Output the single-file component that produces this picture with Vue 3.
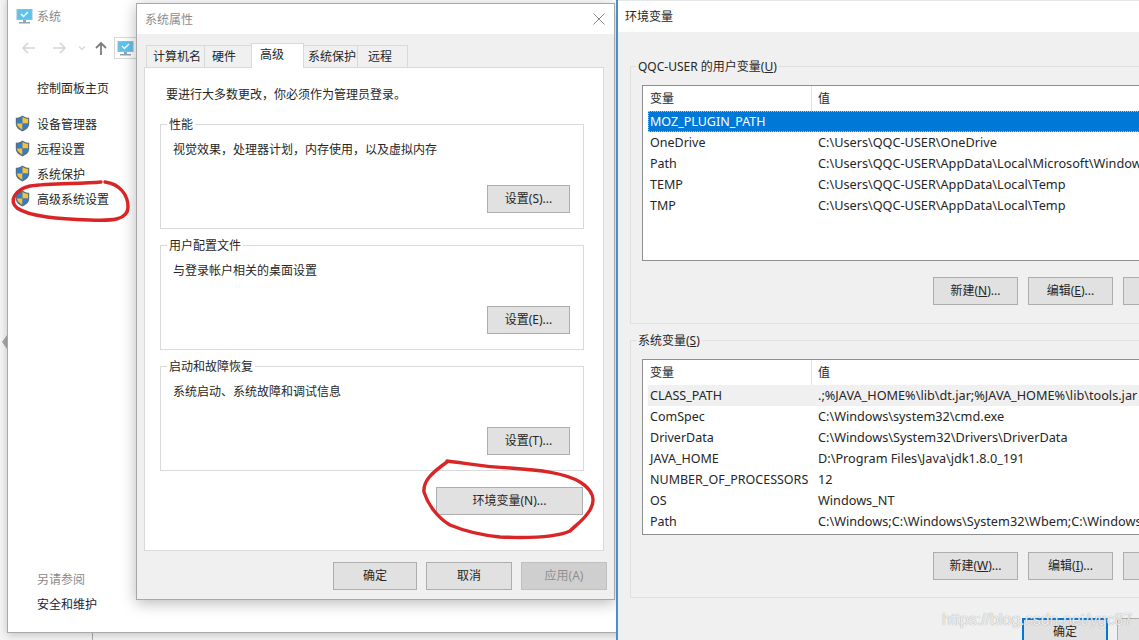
<script setup>
const navItems = ['设备管理器', '远程设置', '系统保护', '高级系统设置']
const tabs = [
  { label: '计算机名', w: 59, pad: 6 },
  { label: '硬件', w: 48, pad: 7 },
  { label: '高级', w: 53, pad: 8, active: true },
  { label: '系统保护', w: 55, pad: 4 },
  { label: '远程', w: 51, pad: 10 }
]
const groups = [
  { title: '性能', text: '视觉效果，处理器计划，内存使用，以及虚拟内存', btn: '设置(S)...' },
  { title: '用户配置文件', text: '与登录帐户相关的桌面设置', btn: '设置(E)...' },
  { title: '启动和故障恢复', text: '系统启动、系统故障和调试信息', btn: '设置(T)...' }
]
const userVars = [
  { n: 'MOZ_PLUGIN_PATH', v: '', sel: true },
  { n: 'OneDrive', v: 'C:\\Users\\QQC-USER\\OneDrive' },
  { n: 'Path', v: 'C:\\Users\\QQC-USER\\AppData\\Local\\Microsoft\\WindowsApps;' },
  { n: 'TEMP', v: 'C:\\Users\\QQC-USER\\AppData\\Local\\Temp' },
  { n: 'TMP', v: 'C:\\Users\\QQC-USER\\AppData\\Local\\Temp' }
]
const sysVars = [
  { n: 'CLASS_PATH', v: '.;%JAVA_HOME%\\lib\\dt.jar;%JAVA_HOME%\\lib\\tools.jar', soft: true },
  { n: 'ComSpec', v: 'C:\\Windows\\system32\\cmd.exe' },
  { n: 'DriverData', v: 'C:\\Windows\\System32\\Drivers\\DriverData' },
  { n: 'JAVA_HOME', v: 'D:\\Program Files\\Java\\jdk1.8.0_191' },
  { n: 'NUMBER_OF_PROCESSORS', v: '12' },
  { n: 'OS', v: 'Windows_NT' },
  { n: 'Path', v: 'C:\\Windows;C:\\Windows\\System32\\Wbem;C:\\Windows\\System32' }
]
</script>

<template>
  <div class="desk">
    <div class="side-arrow"></div>
    <div class="taskline"></div>

    <section class="win sys">
      <div class="sys-title">
        <svg class="pc" width="17" height="15" viewBox="0 0 17 15">
          <rect x="1" y="0.5" width="15" height="10" fill="#5cc3ee" stroke="#9fb9c9" />
          <path d="M5 5l2.5 2.5L12 3" fill="none" stroke="#fff" stroke-width="1.4" />
          <path d="M7 11h3v2H7zM3 13h11v1.4H3z" fill="#8fa6b5" />
        </svg>
        <span>系统</span>
      </div>
      <div class="sys-nav">
        <svg width="90" height="16" viewBox="0 0 90 16" fill="none">
          <path d="M4 8h12M9 3L4 8l5 5" stroke="#d5d5d5" stroke-width="1.6" />
          <path d="M34 8h12M41 3l5 5-5 5" stroke="#d5d5d5" stroke-width="1.6" />
          <path d="M60 6.5l3 3 3-3" stroke="#d5d5d5" stroke-width="1.2" />
          <path d="M82 15V3M77 8l5-5 5 5" stroke="#7c7c7c" stroke-width="1.8" />
        </svg>
        <div class="addr">
          <svg width="17" height="15" viewBox="0 0 17 15">
            <rect x="1" y="0.5" width="15" height="10" fill="#5cc3ee" stroke="#9fb9c9" />
            <path d="M5 5l2.5 2.5L12 3" fill="none" stroke="#fff" stroke-width="1.4" />
            <path d="M7 11h3v2H7zM3 13h11v1.4H3z" fill="#8fa6b5" />
          </svg>
        </div>
      </div>
      <div class="home">控制面板主页</div>
      <ul class="nav">
        <li v-for="item in navItems" :key="item">
          <svg width="15" height="17" viewBox="0 0 15 17">
            <path d="M7.5 .5C5.5 2 3 2.8 .8 2.8v6c0 3.6 3 6.2 6.7 7.7 3.7-1.500 6.700-4.100 6.700-7.700v-6C12 2.800 9.500 2 7.500 .5z" fill="#5b6f82" />
            <path d="M7.500 2C6 3 4 3.700 2 3.900V8.500h5.500z" fill="#2f7fd0" />
            <path d="M7.500 2v6.500H13V3.900C11 3.700 9 3 7.500 2z" fill="#f5c33b" />
            <path d="M2 8.500c.2 2.800 2.600 4.800 5.500 6.200V8.500z" fill="#f5c33b" />
            <path d="M13 8.500c-.2 2.800-2.600 4.800-5.500 6.200V8.500z" fill="#2f7fd0" />
          </svg>
          <span>{{ item }}</span>
        </li>
      </ul>
      <div class="see">
        <div class="see-head">另请参阅</div>
        <div class="see-link">安全和维护</div>
      </div>
    </section>

    <section class="win props">
      <header class="props-title">
        <span>系统属性</span>
        <svg width="12" height="12" viewBox="0 0 12 12"><path d="M.5 .5l11 11M11.500 .5l-11 11" stroke="#8a8a8a" fill="none" /></svg>
      </header>
      <div class="props-body">
        <div class="tabs">
          <div
            v-for="t in tabs"
            :key="t.label"
            class="tab"
            :class="{ on: t.active }"
            :style="{ width: t.w + 'px', paddingLeft: t.pad + 'px' }"
          >{{ t.label }}</div>
        </div>
        <div class="panel">
          <p class="notice">要进行大多数更改，你必须作为管理员登录。</p>
          <fieldset v-for="g in groups" :key="g.title" class="pgroup">
            <legend>{{ g.title }}</legend>
            <p>{{ g.text }}</p>
            <button class="btn small">{{ g.btn }}</button>
          </fieldset>
          <div class="env-row">
            <button class="btn env">环境变量(N)...</button>
          </div>
        </div>
        <div class="foot">
          <button class="btn f1 f0">确定</button>
          <button class="btn f1">取消</button>
          <button class="btn f1 off">应用(A)</button>
        </div>
      </div>
    </section>

    <section class="win env-win">
      <header class="env-title">环境变量</header>
      <div class="env-body">
        <fieldset class="vgroup first">
          <legend>QQC-USER 的用户变量(<u>U</u>)</legend>
          <div class="list">
            <div class="lhead"><span class="c1">变量</span><span class="c2">值</span></div>
            <div class="rows">
              <div v-for="r in userVars" :key="r.n" class="row" :class="{ sel: r.sel }">
                <span class="c1">{{ r.n }}</span><span class="c2">{{ r.v }}</span>
              </div>
            </div>
          </div>
          <div class="acts">
            <button class="btn vb">新建(<u>N</u>)...</button>
            <button class="btn vb">编辑(<u>E</u>)...</button>
            <button class="btn vb">删除(<u>D</u>)</button>
          </div>
        </fieldset>
        <fieldset class="vgroup second">
          <legend>系统变量(<u>S</u>)</legend>
          <div class="list">
            <div class="lhead"><span class="c1">变量</span><span class="c2">值</span></div>
            <div class="rows">
              <div v-for="r in sysVars" :key="r.n + r.v" class="row" :class="{ soft: r.soft }">
                <span class="c1">{{ r.n }}</span><span class="c2">{{ r.v }}</span>
              </div>
            </div>
          </div>
          <div class="acts">
            <button class="btn vb">新建(<u>W</u>)...</button>
            <button class="btn vb">编辑(<u>I</u>)...</button>
            <button class="btn vb">删除(<u>L</u>)</button>
          </div>
        </fieldset>
        <div class="env-foot">
          <button class="btn vb ok">确定</button>
          <button class="btn vb">取消</button>
        </div>
      </div>
    </section>

    <svg class="ink" width="1139" height="640" viewBox="0 0 1139 640" fill="none">
      <path d="M105 182C120 184 128 195 128 207C128 220 112 221 90 220C60 219 30 217 17 208C9 201 14 190 30 186C50 183 80 184 101 182" stroke="#d92525" stroke-width="3.4" stroke-linecap="round" />
      <path d="M447 461C465 463 485 467 510 468C540 470 565 473 580 482C593 490 596 500 590 510C584 520 576 525 570 531C555 538 525 538 500 537C480 535 462 530 450 525C438 518 428 505 424 492C423 482 430 474 447 462" stroke="#d92525" stroke-width="3.4" stroke-linecap="round" />
    </svg>
    <div class="mark">https://blog.csdn.net/ygc87</div>
  </div>
</template>

<style scoped>
.desk {
  position: relative;
  width: 1139px;
  height: 640px;
  overflow: hidden;
  background: #f4f4f4;
  font-family: "Noto Sans", "Noto Sans CJK SC", sans-serif;
  font-size: 12px;
  color: #262626;
}
.side-arrow {
  position: absolute;
  left: 2px;
  top: 335px;
  border: 7px solid transparent;
  border-left: 0;
  border-right: 5px solid #a8a8a8;
}
.taskline {
  position: absolute;
  left: 92px;
  top: 633px;
  width: 1px;
  height: 7px;
  background: #aaa;
}
.win { position: absolute; box-sizing: border-box; }

/* system window */
.sys {
  left: 7px;
  top: -2px;
  width: 640px;
  height: 635px;
  background: #fff;
  border: 1px solid #a9a9a9;
  box-shadow: 0 2px 8px rgba(0, 0, 0, .2);
}
.sys-title {
  display: flex;
  align-items: center;
  gap: 4px;
  padding: 0 0 0 8px;
  height: 34px;
  color: #8a8a8a;
}
.sys-nav { display: flex; align-items: center; gap: 5px; margin-top: 3px; padding-left: 11px; height: 24px; }
.addr {
  width: 100px;
  height: 22px;
  border: 1px solid #d9d9d9;
  padding: 3px 0 0 2px;
  box-sizing: border-box;
}
.home { margin: 20px 0 0 29px; line-height: 18px; }
.nav { list-style: none; margin: 13px 0 0 7px; padding: 0; }
.nav li { display: flex; align-items: center; gap: 7px; height: 25px; }
.see { position: absolute; left: 29px; top: 568px; line-height: 25px; }
.see-head { color: #8a8a8a; }
.see-link { color: #1b1b3a; }

/* system properties */
.props {
  left: 136px;
  top: 3px;
  width: 479px;
  height: 597px;
  background: #f0f0f0;
  border: 1px solid #a8a8a8;
  box-shadow: 0 3px 14px rgba(0, 0, 0, .28);
}
.props-title {
  display: flex;
  align-items: center;
  justify-content: space-between;
  height: 30px;
  padding: 0 9px 0 8px;
  background: #fff;
  color: #8d8d8d;
}
.props-body { padding: 10px 10px 0 7px; }
.tabs { display: flex; height: 23px; padding-left: 2px; align-items: flex-end; }
.tab {
  box-sizing: border-box;
  height: 22px;
  line-height: 21px;
  white-space: nowrap;
  background: #f0f0f0;
  border: 1px solid #d9d9d9;
  border-bottom: 0;
  margin-right: -1px;
}
.tab.on {
  position: relative;
  height: 25px;
  line-height: 22px;
  background: #fff;
  z-index: 1;
  margin-bottom: -1px;
}
.panel {
  box-sizing: border-box;
  height: 484px;
  background: #fff;
  border: 1px solid #d9d9d9;
  padding: 0 19px 0 15px;
}
.notice { margin: 0; padding: 18px 0 0 6px; line-height: 17px; height: 18px; box-sizing: content-box; }
.pgroup {
  position: relative;
  box-sizing: border-box;
  margin: 12px 0 0;
  padding: 0 13px 0 12px;
  height: 113px;
  min-width: 0;
  border: 1px solid #d9d9d9;
}
.pgroup + .pgroup { margin-top: 8px; }
.pgroup legend { padding: 0 2px; line-height: 17px; margin-left: -6px; }
.pgroup p { margin: 8px 0 0; line-height: 17px; }
.btn {
  box-sizing: border-box;
  font: inherit;
  color: #262626;
  background: #e1e1e1;
  border: 1px solid #adadad;
  padding: 0;
  line-height: 1;
  display: block;
}
.small { width: 83px; height: 28px; margin: 27px 0 0 auto; }
.env-row { display: flex; justify-content: flex-end; margin-top: 16px; padding-right: 1px; }
.env { width: 147px; height: 28px; }
.foot { display: flex; justify-content: flex-end; gap: 9px; padding-top: 11px; margin-right: -3px; }
.f1 { width: 86px; height: 28px; }
.f0 { width: 84px; }
.off { background: #cfcfcf; border-color: #bfbfbf; color: #8f8f8f; }

/* environment variables */
.env-win {
  left: 616px;
  top: 0;
  width: 620px;
  height: 640px;
  background: #f0f0f0;
  border-left: 2px solid #4a90c8;
}
.env-title {
  height: 32px;
  line-height: 31px;
  padding-left: 7px;
  background: #fff;
  border-top: 1px solid #e6e6e6;
  box-sizing: border-box;
}
.env-body { padding: 26px 14px 0 12px; }
.vgroup {
  box-sizing: border-box;
  margin: 0;
  padding: 10px 8px 0 11px;
  min-width: 0;
  height: 266px;
  border: 1px solid #e0e0e0;
}
.vgroup.first { margin-bottom: 8px; }
.vgroup legend { padding: 0 2px; margin-left: -6px; line-height: 17px; }
.list {
  box-sizing: border-box;
  height: 176px;
  background: #fff;
  border: 1px solid #8e8e8e;
  overflow: hidden;
}
.lhead { display: flex; height: 25px; line-height: 25px; }
.lhead .c1 { width: 169px; padding-left: 7px; border-right: 1px solid #e3e3e3; }
.lhead .c2 { padding-left: 6px; }
.c1 { box-sizing: border-box; flex: none; white-space: nowrap; }
.c2 { white-space: nowrap; }
.rows { padding: 0 0 0 5px; }
.row { display: flex; height: 21px; line-height: 21px; font-size: 12.5px; }
.row .c1 { width: 167px; padding-left: 2px; }
.row .c2 { padding-left: 3px; font-size: 12.7px; }
.row.sel { background: #0078d7; color: #fff; outline: 1px dotted #9cc; outline-offset: -1px; }
.row.soft { background: #f0f0f0; }
.acts { display: flex; gap: 10px; margin: 16px 0 0 291px; }
.second .acts { margin-top: 17px; }
.vb { width: 85px; height: 28px; flex: none; }
.env-foot { display: flex; gap: 9px; margin: 20px 0 0 392px; }
.ok { width: 86px; border: 2px solid #0078d7; }

.ink { position: absolute; left: 0; top: 0; pointer-events: none; }
.mark {
  position: absolute;
  left: 942px;
  top: 611px;
  font-family: "Liberation Sans", sans-serif;
  font-size: 16px;
  color: rgba(255, 255, 255, .85);
  text-shadow: 0 0 1px rgba(110, 110, 110, .8);
}
</style>
